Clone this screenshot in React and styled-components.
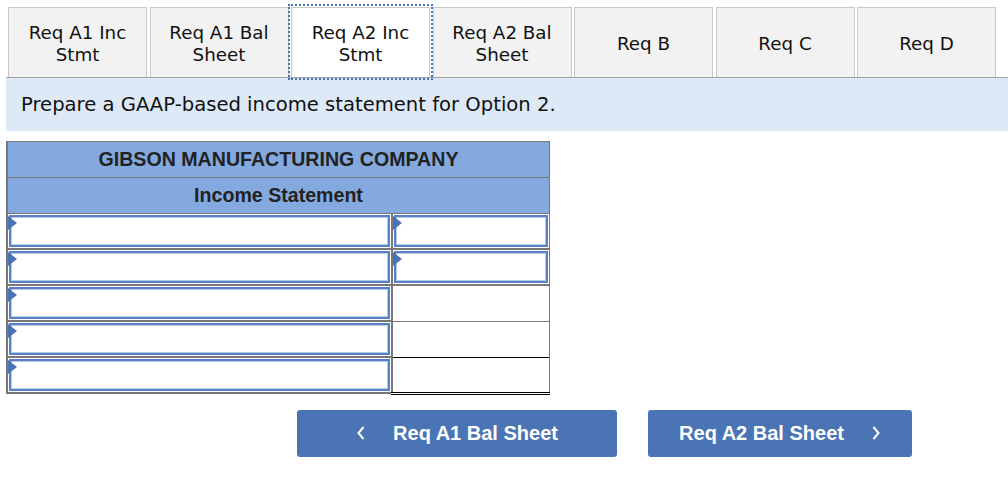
import React from 'react'
import styled, { createGlobalStyle } from 'styled-components'

const GlobalStyle = createGlobalStyle`
  body {
    margin: 0;
    background: #ffffff;
    font-family: "DejaVu Sans", Verdana, sans-serif;
  }
`

const tabs = [
  ['Req A1 Inc', 'Stmt'],
  ['Req A1 Bal', 'Sheet'],
  ['Req A2 Inc', 'Stmt'],
  ['Req A2 Bal', 'Sheet'],
  ['Req B'],
  ['Req C'],
  ['Req D'],
]

const rows = [
  { input: true },
  { input: true },
  { top: 'black' },
  { top: 'gray' },
  { top: 'black', last: true },
]

const App = () => {
  return (
    <>
      <GlobalStyle />
      <Page>
        <TabRow>
          {tabs.map((lines, i) => (
            <Tab key={i} active={i === 2}>
              {lines.map((l) => (
                <span key={l}>{l}</span>
              ))}
            </Tab>
          ))}
        </TabRow>
        <Instruction>Prepare a GAAP-based income statement for Option 2.</Instruction>

        <Sheet>
          <tbody>
            <tr>
              <HeadCell colSpan={2}>GIBSON MANUFACTURING COMPANY</HeadCell>
            </tr>
            <tr>
              <HeadCell colSpan={2}>Income Statement</HeadCell>
            </tr>
            {rows.map((r, i) => (
              <tr key={i}>
                <LabelCell>
                  <Field>
                    <Marker />
                  </Field>
                </LabelCell>
                {r.input ? (
                  <AmountCell>
                    <Field>
                      <Marker />
                    </Field>
                  </AmountCell>
                ) : (
                  <TotalCell top={r.top} last={r.last} />
                )}
              </tr>
            ))}
          </tbody>
        </Sheet>

        <NavRow>
          <NavButton>
            <Chevron viewBox="0 0 10 16">
              <path d="M7.5 2 L2.5 8 L7.5 14" />
            </Chevron>
            Req A1 Bal Sheet
          </NavButton>
          <NavButton narrow>
            Req A2 Bal Sheet
            <Chevron viewBox="0 0 10 16">
              <path d="M2.5 2 L7.5 8 L2.5 14" />
            </Chevron>
          </NavButton>
        </NavRow>
      </Page>
    </>
  )
}

const Page = styled.div`
  padding: 7px 0 0 6px;
`

const TabRow = styled.div`
  display: flex;
  gap: 2.5px;
  padding-left: 2px;
  position: relative;
  z-index: 1;
`

const Tab = styled.div`
  box-sizing: border-box;
  width: 139px;
  height: 70px;
  display: flex;
  flex-direction: column;
  align-items: center;
  justify-content: center;
  font-size: 18.3px;
  line-height: 22px;
  color: #111;
  background: ${(p) => (p.active ? '#ffffff' : '#f2f2f2')};
  border: 1px solid #c8c8c8;
  border-bottom: none;
  outline: ${(p) => (p.active ? '2px dotted #4a74b8' : 'none')};
  outline-offset: 1px;
  margin-bottom: ${(p) => (p.active ? '-1px' : '0')};
  padding-top: 2px;
`

const Instruction = styled.div`
  height: 54px;
  box-sizing: border-box;
  background: #dee9f7;
  border-top: 1px solid #a3a3a3;
  padding: 15px 0 0 15px;
  font-size: 19.6px;
  color: #111;
`

const Sheet = styled.table`
  margin-top: 10px;
  width: 544px;
  border-collapse: collapse;
  font-family: "Liberation Sans", Arial, sans-serif;
  border-left: 2px solid #787878;
  border-bottom: 2px solid #787878;
`

const HeadCell = styled.td`
  height: 35px;
  padding: 0;
  background: #84a9de;
  border: 1px solid #787878;
  border-left: none;
  text-align: center;
  font-weight: bold;
  font-size: 19.6px;
  color: #222;
`

const LabelCell = styled.td`
  width: 385px;
  height: 34px;
  padding: 1px;
  box-sizing: border-box;
  border-bottom: 2px solid #787878;
  border-right: 2px solid #787878;
`

const AmountCell = styled.td`
  height: 34px;
  padding: 1px;
  box-sizing: border-box;
  border-bottom: 2px solid #787878;
  border-right: 1px solid #787878;
`

const TotalCell = styled.td`
  height: 34px;
  padding: 0;
  border-top: 1px solid ${(p) => (p.top === 'black' ? '#000' : '#7a7a7a')};
  border-right: 1px solid #7a7a7a;
  border-bottom: ${(p) => (p.last ? '3px double #000' : 'none')};
  background: #fff;
`

const Field = styled.div`
  position: relative;
  box-sizing: border-box;
  height: 32px;
  background: #fff;
  border: 2px solid #5a82c2;
  box-shadow: inset 0 0 0 1px #b4c8e8;
`

const Marker = styled.span`
  position: absolute;
  left: -3px;
  top: -1px;
  width: 0;
  height: 0;
  border-top: 7px solid transparent;
  border-bottom: 7px solid transparent;
  border-left: 9px solid #4a74b8;
`

const NavRow = styled.div`
  display: flex;
  gap: 31px;
  margin: 15px 0 0 291px;
`

const NavButton = styled.button`
  width: ${(p) => (p.narrow ? '264px' : '320px')};
  height: 47px;
  display: flex;
  align-items: center;
  justify-content: center;
  gap: 27px;
  border: none;
  border-radius: 3px;
  background: #4a74b4;
  color: #fff;
  font-family: "Liberation Sans", Arial, sans-serif;
  font-weight: bold;
  font-size: 20px;
  cursor: pointer;
`

const Chevron = styled.svg`
  width: 10px;
  height: 16px;
  fill: none;
  stroke: #fff;
  stroke-width: 2;
`

export default App
